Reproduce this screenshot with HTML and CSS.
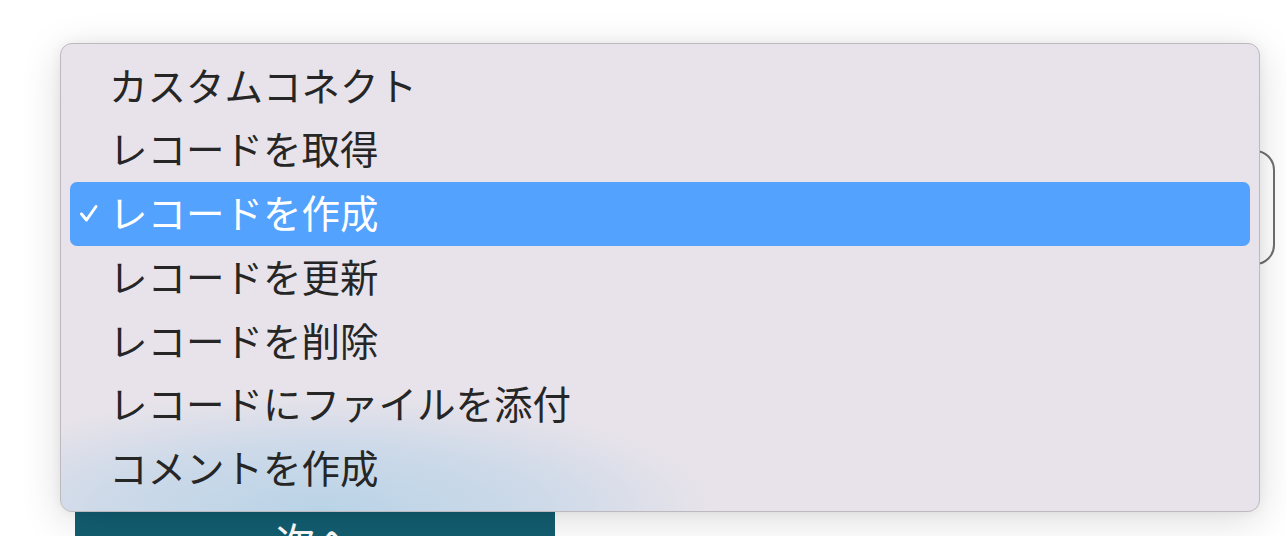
FILE: index.html
```html
<!DOCTYPE html>
<html lang="ja">
<head>
<meta charset="utf-8">
<link rel="stylesheet" href="styles.css">
</head>
<body>
<div class="page">
  <div class="field">
    <div class="select-box"></div>
  </div>
  <div class="actions">
    <button class="next-btn">次へ</button>
  </div>
</div>
<div class="menu">
  <div class="glow"></div>
  <ul class="options">
    <li class="option">カスタムコネクト</li>
    <li class="option">レコードを取得</li>
    <li class="option selected"><svg class="check" viewBox="0 0 20 20" width="20" height="20"><polyline points="2.5,11 7.5,17 17,3.5" fill="none" stroke="#fff" stroke-width="3" stroke-linecap="round" stroke-linejoin="round"/></svg>レコードを作成</li>
    <li class="option">レコードを更新</li>
    <li class="option">レコードを削除</li>
    <li class="option">レコードにファイルを添付</li>
    <li class="option">コメントを作成</li>
  </ul>
</div>
</body>
</html>
```

FILE: styles.css
```css
html, body {
  margin: 0;
  padding: 0;
  background: #ffffff;
  width: 1286px;
  height: 536px;
  overflow: hidden;
  font-family: "Noto Sans CJK JP", "Noto Sans", sans-serif;
}

.page {
  position: relative;
  width: 1286px;
  height: 536px;
  display: flex;
  flex-direction: column;
}

.field {
  padding: 150px 11px 0 0;
  display: flex;
  justify-content: flex-end;
}

.select-box {
  width: 900px;
  height: 111px;
  border: 2px solid #6f6f6f;
  border-radius: 20px;
  box-sizing: content-box;
}

.actions {
  margin-top: auto;
  padding-left: 75px;
  height: 26px;
  overflow: hidden;
}

.next-btn {
  width: 480px;
  height: 60px;
  border: none;
  background: #125e71;
  color: #ffffff;
  font-family: "Noto Sans CJK JP", sans-serif;
  font-size: 40px;
  padding: 0;
  line-height: 50px;
  display: block;
}

.menu {
  position: absolute;
  left: 60px;
  top: 43px;
  width: 1200px;
  height: 469px;
  box-sizing: border-box;
  background: #e8e3ea;
  border: 1px solid #bdb9bf;
  border-radius: 12px;
  box-shadow: 0 8px 40px rgba(0, 0, 0, 0.14), 0 0 12px rgba(0, 0, 0, 0.05);
  overflow: hidden;
}

.glow {
  position: absolute;
  left: -140px;
  bottom: -120px;
  width: 800px;
  height: 240px;
  background: radial-gradient(ellipse at center, rgba(180, 210, 230, 0.9) 0%, rgba(190, 212, 232, 0.65) 38%, rgba(232, 227, 234, 0) 70%);
  pointer-events: none;
}

.options {
  position: relative;
  list-style: none;
  margin: 0;
  padding: 10.5px 9px;
}

.option {
  position: relative;
  height: 63.75px;
  line-height: 58px;
  padding-left: 39px;
  font-size: 38.5px;
  color: #262626;
  border-radius: 7px;
  white-space: nowrap;
}

.option.selected {
  background: #53a2fd;
  color: #ffffff;
}

.check {
  position: absolute;
  left: 9px;
  top: 21px;
}
```
